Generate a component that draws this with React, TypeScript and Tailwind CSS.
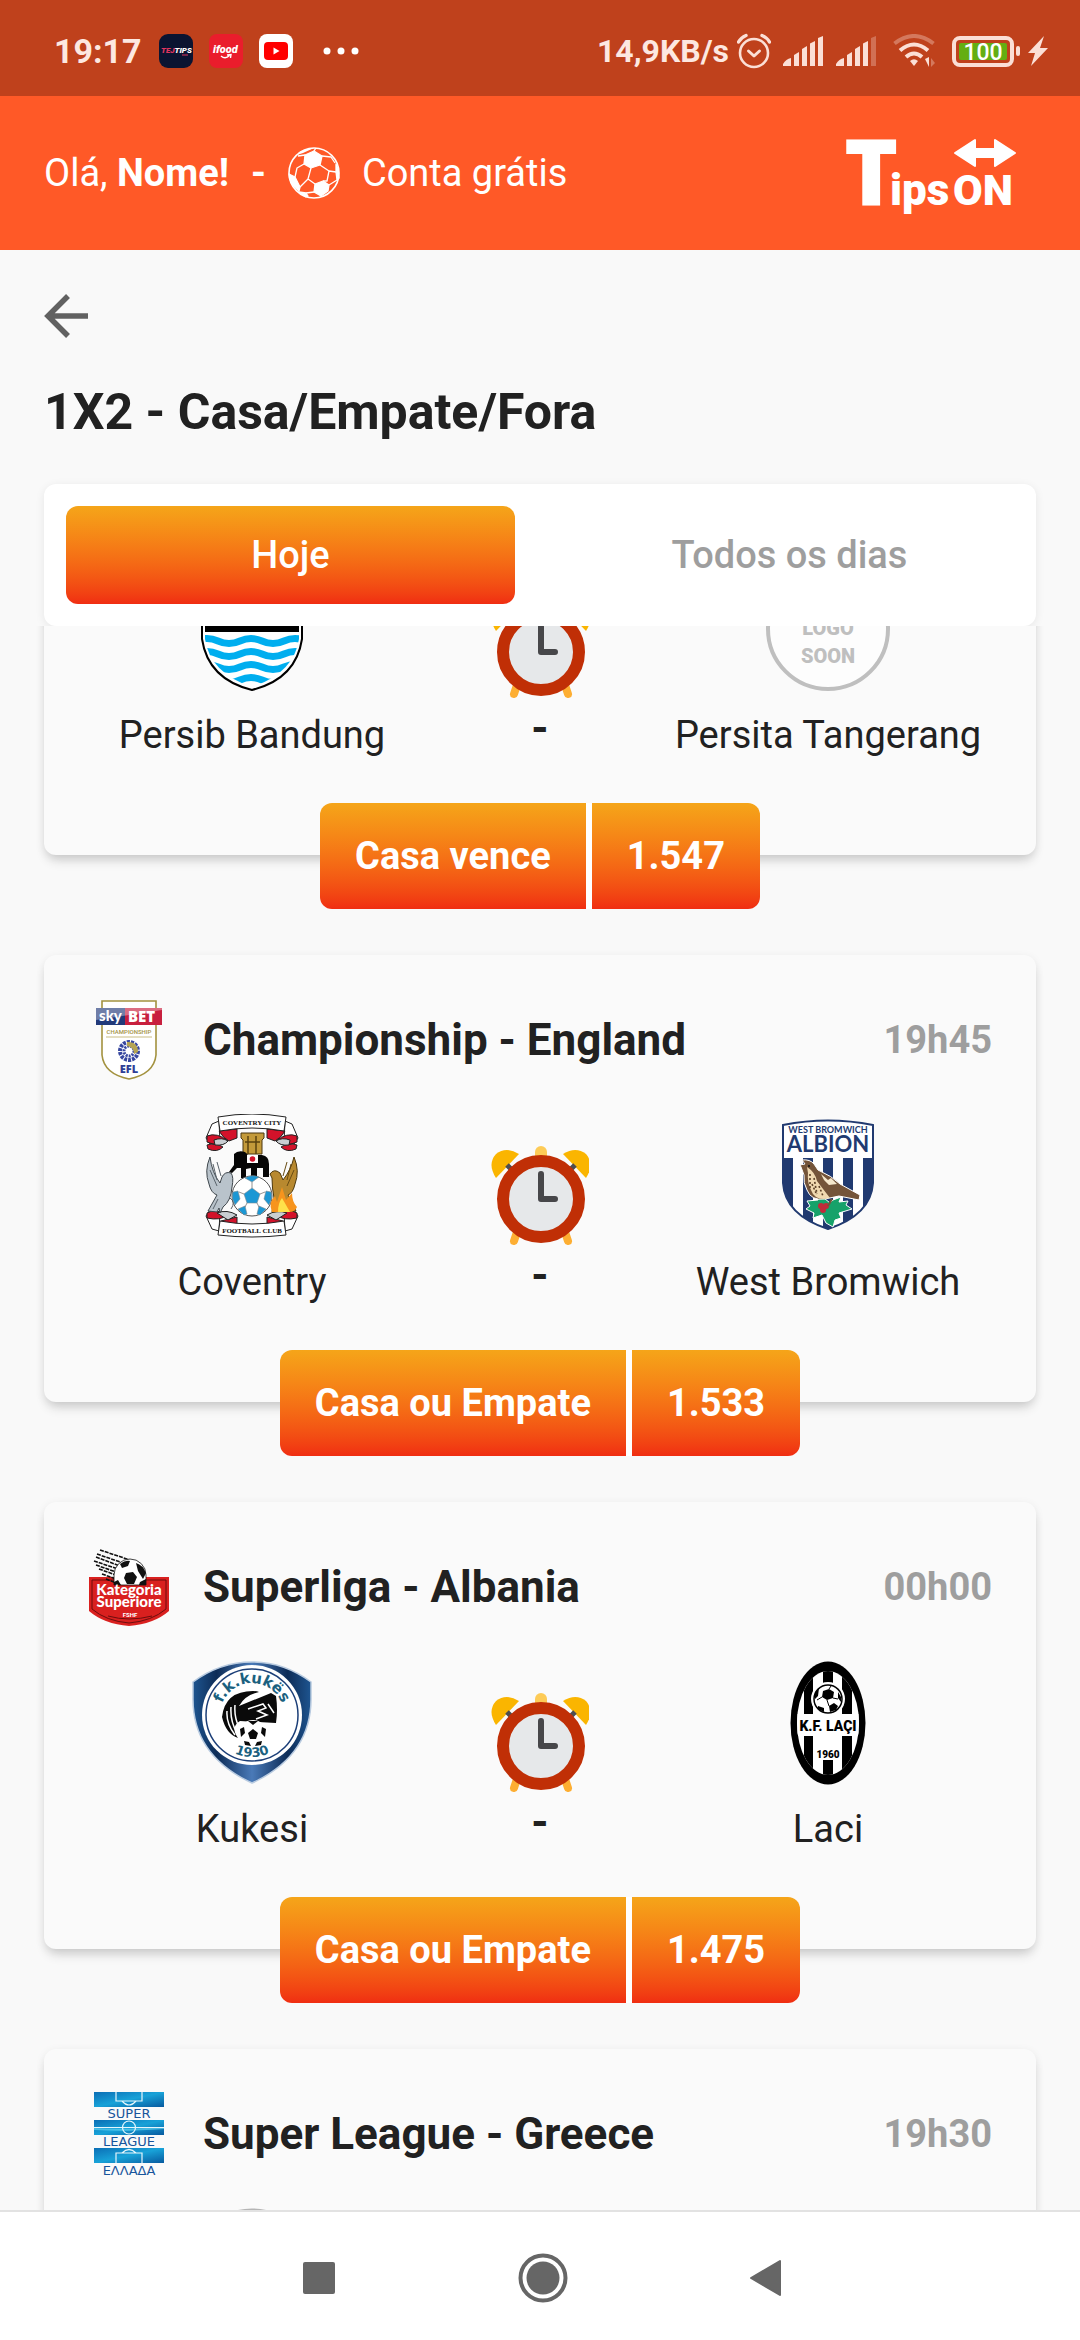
import { useLayoutEffect, useRef, useState } from "react";
import type { ReactNode } from "react";

type Match = {
  league: string;
  time: string;
  leagueLogo: ReactNode;
  home: string;
  homeLogo: ReactNode;
  away: string;
  awayLogo: ReactNode;
  tip: string;
  odd: string;
};

/* ---------- status bar icons ---------- */

const AppBadges = () => (
  <div className="flex items-center gap-4">
    <svg width="34" height="34" viewBox="0 0 34 34">
      <rect width="34" height="34" rx="9" fill="#0b1431" />
      <text x="2" y="19" fontFamily="Roboto" fontWeight="900" fontStyle="italic" fontSize="8" fill="#fff">
        <tspan fill="#e0355f">TEJ</tspan>TIPS
      </text>
      <path d="M23 21h6" stroke="#e0355f" strokeWidth="1" />
    </svg>
    <svg width="34" height="34" viewBox="0 0 34 34">
      <rect width="34" height="34" rx="8" fill="#ea1d2c" />
      <text x="4" y="19" fontFamily="Roboto" fontWeight="900" fontStyle="italic" fontSize="11" fill="#fff">ifood</text>
      <path d="M12 22c3 2.500 6 2 8.500-.5M18 21l4-.5-.5 3.500" fill="none" stroke="#fff" strokeWidth="1.400" />
    </svg>
    <svg width="34" height="34" viewBox="0 0 34 34">
      <rect width="34" height="34" rx="8" fill="#fff" />
      <rect x="5" y="8" width="24" height="18" rx="4" fill="#f00" />
      <path d="M14.500 13.500v7l6-3.500z" fill="#fff" />
    </svg>
  </div>
);

const AlarmIcon = () => (
  <svg width="34" height="36" viewBox="0 0 34 36" fill="none" stroke="#fbdfd6" strokeWidth="2.600" strokeLinecap="round" strokeLinejoin="round">
    <circle cx="17" cy="20" r="14" />
    <path d="M11.500 18l5.500 5 5.500-5" strokeWidth="3" />
    <path d="M1.500 9Q4 4.500 9 2.500M32.500 9Q30 4.500 25 2.500" strokeWidth="3.400" />
  </svg>
);

const SignalIcon = ({ weak = false }: { weak?: boolean }) => (
  <svg width="41" height="30" viewBox="0 0 41 30" fill="#fbdfd6">
    <path d="M0 30v-2q3-5 8-6v8z" />
    <path d="M11 30V19l5-3v14z" />
    <path d="M19 30V13l5-3v20z" />
    <path d="M27 30V7.500l5-2.500v25z" />
    <path d="M35 30V2l5-2v30z" opacity={weak ? 0.3 : 1} />
  </svg>
);

const WifiIcon = () => (
  <svg width="43" height="34" viewBox="0 0 43 34" fill="none" stroke="#fbdfd6" strokeWidth="4">
    <path d="M1.500 9.500Q21 -5.500 40.500 9.500" opacity="0.35" />
    <path d="M7 16.500Q21 4.500 35 16.500" />
    <path d="M13 23Q21 16 29 23" />
    <path d="M17 27q4-3.500 8 0l-4 5z" fill="#fbdfd6" stroke="none" />
    <path d="M32 25l4 8v-10z" fill="#fbdfd6" stroke="none" />
    <path d="M38 33v-9l4 5z" fill="#fbdfd6" stroke="none" opacity="0.35" />
  </svg>
);

const BatteryIcon = () => (
  <svg width="68" height="32" viewBox="0 0 68 32">
    <rect x="2" y="3" width="58" height="27" rx="6" fill="none" stroke="#fbdfd6" strokeWidth="4" />
    <rect x="7" y="8" width="48" height="17" rx="2" fill="#64ae12" />
    <rect x="64" y="11" width="4" height="10" rx="2" fill="#fbdfd6" />
    <text x="31" y="25" textAnchor="middle" fontFamily="Roboto" fontWeight="500" fontSize="23" fill="#fff">100</text>
  </svg>
);

const BoltIcon = () => (
  <svg width="20" height="30" viewBox="0 0 20 30">
    <path d="M16 0L0 17h7l-4 13L20 12h-8z" fill="#fbdfd6" />
  </svg>
);

/* ---------- shared drawings ---------- */

const HeaderBall = () => (
  <svg width="52" height="54" viewBox="0 0 52 54" fill="#fff" stroke="#fff" strokeWidth="1.300" strokeLinejoin="round">
    <circle cx="26" cy="27" r="25" fill="none" strokeWidth="1.600" />
    <path d="M17 9l9-4 8 5-2 9-9 3-7-4z" />
    <path d="M1 28l6 3 5 10-1 4Q1 37 1 28z" />
    <path d="M27 38l8-3 6 4-1 6-7 5-7-4z" />
    <path d="M48 18l2 5 1 9-2 2-1-8z" />
    <path d="M11 46l7 1 2 3-2 1z" />
    <path d="M17 9l-7 1M34 10l9 1 4 6M16 18l-7 4-2 9M23 22l-3 11-8 8M32 19l9 6-2 10-4 0M41 25l7 1M20 33l7 5M26 5l2-3M41 39l8-5M26 46l-8 1" fill="none" />
    <path d="M9 9l6-2 11-5-4 0-11 4z" stroke="none" />
  </svg>
);

const TipsOnLogo = () => (
  <svg width="178" height="86" viewBox="-6 -8 178 86" fill="#fff">
    <path d="M107 15L127 2v9h20V2l20 13-20 13v-9h-20v9z" strokeWidth="2" stroke="#fff" strokeLinejoin="round" />
    <text x="-4" y="67" fontFamily="'Open Sans'" fontWeight="800" fontSize="92">T</text>
    <text x="42" y="67" fontFamily="Roboto" fontWeight="900" fontSize="44">ips</text>
    <text x="105" y="67" fontFamily="Roboto" fontWeight="900" fontSize="43">ON</text>
  </svg>
);

const ClockIcon = () => (
  <svg width="98" height="100" viewBox="0 0 98 100">
    <rect x="44" y="0" width="12" height="16" rx="6" fill="#fdcb57" />
    <path d="M27 83l-4 12M73 83l4 12" stroke="#fdae32" strokeWidth="8" strokeLinecap="round" />
    <path d="M5 32Q-4 18 5 8Q15 0 28 8z" fill="#fab500" />
    <path d="M95 32Q104 18 95 8Q85 0 72 8z" fill="#fab500" />
    <path d="M16 19l6 6M84 19l-6 6" stroke="#4d4d50" strokeWidth="5" />
    <circle cx="50" cy="53" r="38" fill="#e6e8ea" stroke="#c02f06" strokeWidth="12" />
    <path d="M50 28v25h14" fill="none" stroke="#47474a" strokeWidth="6" strokeLinecap="round" strokeLinejoin="round" />
  </svg>
);

/* ---------- league logos ---------- */

const EflLogo = () => (
  <svg width="82" height="82" viewBox="0 0 82 82">
    <path d="M14 2h54v54q-2 19-27 24Q16 75 14 56z" fill="#fff" stroke="#a3923f" strokeWidth="1.600" />
    <rect x="8" y="9" width="30" height="17" fill="#223a7a" />
    <rect x="37" y="9" width="37" height="17" fill="#c8203e" />
    <path d="M8 9h66v2L8 21z" fill="#fff" opacity="0.35" />
    <text x="11" y="22" fontFamily="Lato" fontWeight="900" fontSize="15" fill="#fff">sky</text>
    <text x="40" y="23" fontFamily="'Open Sans'" fontWeight="800" fontSize="15" fill="#fff">BET</text>
    <text x="41" y="35" textAnchor="middle" fontFamily="Roboto" fontWeight="500" fontSize="6" fill="#a3923f">CHAMPIONSHIP</text>
    <path d="M18 38h46" stroke="#c9bd84" strokeWidth="1" />
    <circle cx="41" cy="52" r="9" fill="none" stroke="#3747a0" strokeWidth="4" strokeDasharray="3 1" />
    <circle cx="41" cy="52" r="5" fill="none" stroke="#3747a0" strokeWidth="3" strokeDasharray="2 1" />
    <path d="M39 43q11-1 11 10l-4 2q0-7-7-8z" fill="#b5a452" />
    <text x="41" y="74" textAnchor="middle" fontFamily="'Open Sans'" fontWeight="800" fontSize="11" fill="#2f3f97">EFL</text>
  </svg>
);

const KategoriaLogo = () => (
  <svg width="82" height="82" viewBox="0 0 82 82">
    <path d="M1 31h80v34Q66 78 41 80Q16 78 1 65z" fill="#d9201f" />
    <path d="M4 34h74v29Q64 75 41 77Q18 75 4 63z" fill="none" stroke="#6d0d0d" strokeWidth="1" />
    <path
      d="M12 4l30 10M9 8l26 9M8 11l24 9M6 15l24 8M8 19l20 7M11 23l17 6M14 28l14 5M18 33l10 4"
      stroke="#111"
      strokeWidth="1.600"
      strokeDasharray="4 1"
    />
    <path d="M26 39V29a16 16 0 0 1 32 0v10z" fill="#fff" stroke="#111" strokeWidth="0.800" />
    <path d="M32 18q5-4 10-3l-2 5-6 2zM48 17q7 2 10 10l-3 6-5-8zM38 27l7-1 4 5-3 7h-7l-3-6zM26 36l4-2 3 5h-7zM52 36l6-3v6h-7z" fill="#111" />
    <text x="41" y="49" textAnchor="middle" fontFamily="Lato" fontWeight="900" fontSize="15" fill="#fff">Kategoria</text>
    <text x="41" y="61" textAnchor="middle" fontFamily="Lato" fontWeight="900" fontSize="15" fill="#fff">Superiore</text>
    <text x="42" y="71" textAnchor="middle" fontFamily="Roboto" fontWeight="700" fontSize="6" fill="#fff">FSHF</text>
    <path d="M20 70q21 6 44 0" fill="none" stroke="#6d0d0d" strokeWidth="1" />
  </svg>
);

const SuperLeagueLogo = () => (
  <svg width="82" height="84" viewBox="0 0 82 84">
    <defs>
      <linearGradient id="sl" x1="0" y1="0" x2="1" y2="1">
        <stop offset="0" stopColor="#0b6eb5" />
        <stop offset="0.500" stopColor="#18a2d8" />
        <stop offset="1" stopColor="#075a9f" />
      </linearGradient>
    </defs>
    <rect x="6" y="0" width="70" height="15" fill="url(#sl)" />
    <rect x="6" y="28" width="70" height="15" fill="url(#sl)" />
    <rect x="6" y="56" width="70" height="15" fill="url(#sl)" />
    <path d="M6 37q30 2 70-1" stroke="#5fd0ef" strokeWidth="2" fill="none" opacity="0.700" />
    <g fill="none" stroke="#e6f6fc" strokeWidth="1.200">
      <path d="M28 0v9h26V0M34 9q7 8 14 0M6 35.500h70M28 71v-10h26v10M34 61q7-7 14 0" />
      <circle cx="41" cy="35.500" r="6.500" />
    </g>
    <g fontFamily="'DejaVu Sans'" fontSize="13" fill="#17559c" textAnchor="middle">
      <text x="41" y="26">SUPER</text>
      <text x="41" y="54">LEAGUE</text>
      <text x="41" y="83">ΕΛΛΑΔΑ</text>
    </g>
  </svg>
);

/* ---------- team crests ---------- */

const PersibCrest = () => (
  <svg width="124" height="124" viewBox="0 0 124 124">
    <defs>
      <clipPath id="persib">
        <path d="M15 10h94v62Q104 106 62 120Q20 106 15 72z" />
      </clipPath>
    </defs>
    <path d="M12 8h100v64Q106 112 62 123Q18 112 12 72z" fill="#fff" stroke="#000" strokeWidth="2" />
    <g clipPath="url(#persib)">
      <rect x="10" y="0" width="104" height="65" fill="#000" />
      <g fill="none" stroke="#00aeef" strokeWidth="7">
        <path d="M6 74q11-5 22 0t22 0 22 0 22 0 22 0" />
        <path d="M6 87q11-5 22 0t22 0 22 0 22 0 22 0" />
        <path d="M6 100q11-5 22 0t22 0 22 0 22 0 22 0" />
        <path d="M6 113q11-5 22 0t22 0 22 0 22 0 22 0" />
      </g>
    </g>
  </svg>
);

const SoonCrest = () => (
  <svg width="124" height="124" viewBox="0 0 124 124">
    <circle cx="62" cy="62" r="60" fill="#fdfdfd" stroke="#bfbfbf" strokeWidth="4" />
    <g fontFamily="Roboto" fontWeight="900" fontSize="20" fill="#bfbfbf" textAnchor="middle">
      <text x="62" y="68">LOGO</text>
      <text x="62" y="96">SOON</text>
    </g>
  </svg>
);

const CoventryCrest = () => (
  <svg width="124" height="124" viewBox="0 0 124 124">
    {/* banners */}
    <g stroke="#222" strokeWidth="1" fill="#fff">
      <path d="M29 7l-7 3-6 14 4 6 10-2zM95 7l7 3 6 14-4 6-10-2zM29 117l-7-2-6-13 4-6 10 2zM95 117l7-2 6-13-4-6-10 2z" />
      <g fill="#d3122a">
        <path d="M17 22q10-4 21 5-8 7-21 1zM17 31q8-3 16 2-6 6-15 2zM29 17l18-2v9l-8 3q-6-3-10-10z" />
        <path d="M107 22q-10-4-21 5 8 7 21 1zM107 31q-8-3-16 2 6 6 15 2zM95 17l-18-2v9l8 3q6-3 10-10z" />
        <path d="M17 99q8-5 21 2-8 6-21 3zM107 99q-8-5-21 2 8 6 21 3zM31 107l16-4v9l-17-2zM93 107l-16-4v9l17-2z" />
      </g>
      <path d="M24 26q8-3 14 1-4 5-13 4zM100 26q-8-3-14 1 4 5 13 4zM27 99q10-4 20 2l-9 5zM97 99q-10-4-20 2l9 5z" fill="#c9ced2" />
      <path d="M28 3q34-6 68 0l-2 14q-32-6-64 0z" />
      <path d="M28 121q34 4 68 0l-2-14q-32 6-64 0z" />
    </g>
    <text x="62" y="11" textAnchor="middle" fontFamily="'Liberation Serif'" fontWeight="700" fontSize="7" fill="#111">COVENTRY CITY</text>
    <text x="62" y="119" textAnchor="middle" fontFamily="'Liberation Serif'" fontWeight="700" fontSize="7" fill="#111">FOOTBALL CLUB</text>
    {/* castle and elephant */}
    <path d="M51 19h23v5l-2 2v14H53V26l-2-2z" fill="#c39a3a" stroke="#4a3710" strokeWidth="1" />
    <path d="M58 22v18M66 22v18M55 28h15" stroke="#5b430f" strokeWidth="1.500" />
    <path d="M44 40q4-4 11-2l3 3h14q7 1 7 9v13h-6V54h-6v10h-6V54l-5 1v9h-5V54h-4l-5 5-3-1 5-7z" fill="#060606" />
    <path d="M57 41h11v8H57z" fill="#fff" />
    <circle cx="62.500" cy="45" r="2.800" fill="#d3122a" />
    {/* ball */}
    <circle cx="62" cy="82" r="20" fill="#fff" stroke="#555" strokeWidth="1" />
    <g fill="#1b97d4" stroke="#7a8a92" strokeWidth="0.600">
      <path d="M62 74l8 6-3 9H57l-3-9zM55 64q7-4 14-1l-7 5zM43 78l5-1 2 8-5 6q-4-7-2-13zM81 78l-5-1-2 8 5 6q4-7 2-13zM48 95l7-3 2 8-3 1zM76 95l-7-3-2 8 3 1z" />
    </g>
    <path d="M62 68v6M54 80l-5-2M70 80l5-2M57 89l-2 4M67 89l2 4" stroke="#777" strokeWidth="0.800" />
    {/* eagle and phoenix */}
    <path d="M20 43q-6 14-1 27 2 9 8 11l-9 16 9 1 2-4 1 5 3-6q8-6 9-20 2-10-1-14-6-2-9 4l-2 6q-8-10-10-26z" fill="#b9c3cb" stroke="#3f474d" strokeWidth="1" />
    <path d="M23 50l4 16M20 56l7 16M27 48l4 14M28 85l-5 10M40 84q6 4 1 11" stroke="#59636b" strokeWidth="1" fill="none" />
    <path d="M104 43q6 14 1 27-2 9-7 11l8 16-24 1 2-14q-2-10-2-20l-2-4q4-6 10-1l3 7q8-10 11-23z" fill="#b8892f" stroke="#4f390c" strokeWidth="1" />
    <path d="M101 50l-4 16M104 56l-7 16M97 48l-4 14" stroke="#684b12" strokeWidth="1" fill="none" />
    <path d="M82 98q-4-10 3-16l2 6 5-15 4 13 6-7q0 9 5 14-2 5-8 5z" fill="#f7941d" />
    <path d="M88 98q0-9 4-14 4 7 8 14z" fill="#ffe14a" />
  </svg>
);

const WestBromCrest = () => (
  <svg width="124" height="124" viewBox="0 0 124 124">
    <defs>
      <clipPath id="wba">
        <path d="M17 11q45-9 90 0v58q-2 32-45 46-43-14-45-46z" />
      </clipPath>
    </defs>
    <g clipPath="url(#wba)">
      <rect x="10" y="4" width="104" height="114" fill="#fff" />
      <path d="M17 44h10v75H17zM37 44h10v75H37zM57 44h10v75H57zM77 44h10v75H77zM97 44h10v75H97z" fill="#213a70" />
    </g>
    <path d="M17 11q45-9 90 0v58q-2 32-45 46-43-14-45-46z" fill="none" stroke="#213a70" strokeWidth="2" />
    <text x="62" y="19" textAnchor="middle" fontFamily="Lato" fontWeight="700" fontSize="9" fill="#213a70">WEST BROMWICH</text>
    <text x="62" y="38" textAnchor="middle" fontFamily="Lato" fontWeight="700" fontSize="22" fill="#213a70">ALBION</text>
    {/* holly */}
    <path d="M58 84l-5-3-1 5-11 1 3 5-4 3 8 4-1 5 9-3 4 8 7 4 2-7 6-2-2-5 13-4-6-4 2-4-9 1 2-5-8 3-3 3z" fill="#16a26a" stroke="#fff" strokeWidth="1" />
    <circle cx="55" cy="92" r="3" fill="#c22a3a" />
    <circle cx="60" cy="92" r="3" fill="#c22a3a" />
    <circle cx="57" cy="96" r="3" fill="#c22a3a" />
    {/* throstle */}
    <path d="M34 51l5-1-3-4q8-1 12 4l4 6q14 6 22 14l20 11-1 5-20-4-14 3q-14 2-18-9-4-7-3-15l-3-8z" fill="#745439" stroke="#fff" strokeWidth="1" />
    <path d="M41 53q8 5 10 14 6 8 13 17l-6 1q-10 0-13-9-4-8-3-17z" fill="#f0d9b0" />
    <path d="M44 60v14M48 64l3 16M53 72l4 10M46 70l4 9" stroke="#5b3f26" strokeWidth="1.600" strokeDasharray="2 2" />
    <path d="M55 60l7 6 3-2 6 6-8 1-5-5z" fill="#f5e7cc" />
    <path d="M66 85l-4 7" stroke="#745439" strokeWidth="2" />
    <circle cx="43" cy="52" r="1" fill="#111" />
  </svg>
);

const KukesiCrest = () => (
  <svg width="124" height="124" viewBox="0 0 124 124">
    <defs>
      <linearGradient id="kuk" x1="0" y1="0" x2="1" y2="0">
        <stop offset="0" stopColor="#1e5590" />
        <stop offset="0.200" stopColor="#0d2c57" />
        <stop offset="0.500" stopColor="#4a7ab8" />
        <stop offset="0.800" stopColor="#0d2c57" />
        <stop offset="1" stopColor="#1e5590" />
      </linearGradient>
      <path id="kukTop" d="M31 62a32 32 0 1 1 62 0" />
      <path id="kukBottom" d="M20 54a42 42 0 0 0 84 0" />
    </defs>
    <path d="M3 21Q30 1 62 1T121 21V36Q122 94 62 122Q2 94 3 36z" fill="url(#kuk)" stroke="#b9cbe0" strokeWidth="1.500" />
    <circle cx="62" cy="54" r="50" fill="#fff" />
    <circle cx="62" cy="54" r="46" fill="none" stroke="#1c3f78" strokeWidth="1.500" />
    {/* helmeted warrior */}
    <path d="M32 56q3-26 31-26 4 0 6 1-14 3-20 14l32-13 5 3q2 14 0 27l-36-2q-10 6-2 17-12-4-16-21z" fill="#0a0a0a" />
    <path d="M37 50q-1 12 8 24M41 46q-1 14 6 26M45 44q-1 12 4 22M58 48l15-5 3 4-8 3 9 4-11 4M78 43l6 9" fill="none" stroke="#fff" strokeWidth="1.500" />
    {/* ball */}
    <circle cx="63" cy="73" r="14" fill="#fff" />
    <path d="M63 68l5 4-2 6h-6l-2-6zM58 60h10l-5 4zM50 68l4-2 1 6-4 4zM76 68l-4-2-1 6 4 4zM54 80l5 1 2 4-6-1zM72 80l-5 1-2 4 6-1z" fill="#0a0a0a" />
    <text fontFamily="'DejaVu Sans'" fontWeight="700" fontSize="15" fill="#1b6180">
      <textPath href="#kukTop" startOffset="50%" textAnchor="middle">f.k.kukës</textPath>
    </text>
    <text fontFamily="'DejaVu Sans'" fontWeight="700" fontSize="13" fill="#1b6180">
      <textPath href="#kukBottom" startOffset="50%" textAnchor="middle">1930</textPath>
    </text>
  </svg>
);

const LaciCrest = () => (
  <svg width="124" height="124" viewBox="0 0 124 124">
    <defs>
      <clipPath id="laci">
        <ellipse cx="62" cy="62" rx="31" ry="52" />
      </clipPath>
    </defs>
    <ellipse cx="62" cy="62" rx="37.500" ry="61.500" fill="#000" />
    <g clipPath="url(#laci)">
      <rect x="20" y="0" width="84" height="124" fill="#fff" />
      <path d="M38 0h9v124h-9zM57 0h10v124H57zM76 0h10v124h-10z" fill="#000" />
      <path d="M30 53h64v22H30z" fill="#fff" />
      <rect x="47" y="60" width="29" height="39" fill="#fff" />
    </g>
    <circle cx="62" cy="38" r="17" fill="#fff" />
    <circle cx="62" cy="38" r="14" fill="#fff" stroke="#000" strokeWidth="1.500" />
    <path d="M57 30l6-2 5 3-1 6-6 2-5-3zM49 32l4-5-1 8-3 3zM72 31l3 5v5l-3-4zM63 45l5-3 4 3-2 4-6 2zM52 45l6 2v4l-6-3z" fill="#000" />
    <path d="M56 36l-5 3M67 37l5 1M61 39l2 6M63 28l2-3" stroke="#000" strokeWidth="1" />
    <text x="62" y="70" textAnchor="middle" fontFamily="Roboto" fontWeight="900" fontSize="14" fill="#000">K.F. LAÇI</text>
    <text x="62" y="97" textAnchor="middle" fontFamily="Roboto" fontWeight="900" fontSize="10" fill="#000">1960</text>
  </svg>
);

const RoundCrest = () => (
  <svg width="124" height="124" viewBox="0 0 124 124">
    <circle cx="62" cy="62" r="60" fill="#f4f4f4" stroke="#b5b5b5" strokeWidth="3" />
  </svg>
);

const matches: Match[] = [
  {
    league: "",
    time: "",
    leagueLogo: null,
    home: "Persib Bandung",
    homeLogo: <PersibCrest />,
    away: "Persita Tangerang",
    awayLogo: <SoonCrest />,
    tip: "Casa vence",
    odd: "1.547",
  },
  {
    league: "Championship - England",
    time: "19h45",
    leagueLogo: <EflLogo />,
    home: "Coventry",
    homeLogo: <CoventryCrest />,
    away: "West Bromwich",
    awayLogo: <WestBromCrest />,
    tip: "Casa ou Empate",
    odd: "1.533",
  },
  {
    league: "Superliga - Albania",
    time: "00h00",
    leagueLogo: <KategoriaLogo />,
    home: "Kukesi",
    homeLogo: <KukesiCrest />,
    away: "Laci",
    awayLogo: <LaciCrest />,
    tip: "Casa ou Empate",
    odd: "1.475",
  },
  {
    league: "Super League - Greece",
    time: "19h30",
    leagueLogo: <SuperLeagueLogo />,
    home: "",
    homeLogo: <RoundCrest />,
    away: "",
    awayLogo: null,
    tip: "",
    odd: "",
  },
];

const Team = ({ name, logo }: { name: string; logo: ReactNode }) => (
  <div className="flex flex-col items-center gap-[22px]">
    <div className="h-[124px]">{logo}</div>
    <span className="h-11 whitespace-nowrap text-[38px] leading-[44px]">{name}</span>
  </div>
);

const MatchCard = ({ match }: { match: Match }) => (
  <article className="relative rounded-xl bg-[#fafafa] pt-11 shadow-[0_8px_12px_-3px_rgba(0,0,0,0.16),0_2px_10px_rgba(0,0,0,0.07)]">
    <header className="flex h-[82px] items-center gap-[33px] px-11">
      <div className="w-[82px]">{match.leagueLogo}</div>
      <h2 className="flex-1 text-[44px] font-bold">{match.league}</h2>
      <time className="text-[38px] font-bold text-[#9e9e9e]">{match.time}</time>
    </header>
    <div className="mt-[33px] grid grid-cols-3 px-16">
      <Team name={match.home} logo={match.homeLogo} />
      <div className="flex flex-col items-center pt-8">
        <ClockIcon />
        <span className="text-[44px] font-bold leading-[58px]">-</span>
      </div>
      <Team name={match.away} logo={match.awayLogo} />
    </div>
    {match.tip && (
      <div className="mt-[46px] -mb-[54px] flex justify-center">
        <button type="button" className="flex h-[106px] gap-[6px] overflow-hidden rounded-xl bg-white text-[38px] font-bold text-white">
          <span className="flex items-center bg-linear-to-b from-[#f5a519] to-[#f02d12] px-[35px]">{match.tip}</span>
          <span className="flex items-center bg-linear-to-b from-[#f5a519] to-[#f02d12] px-[35px]">{match.odd}</span>
        </button>
      </div>
    )}
  </article>
);

export default function App() {
  const [tab, setTab] = useState("hoje");
  const listRef = useRef<HTMLElement>(null);

  useLayoutEffect(() => {
    if (listRef.current) listRef.current.scrollTop = 218;
  }, []);

  const active = "bg-linear-to-b from-[#f5a519] to-[#f02d12] text-white";
  const idle = "text-[#9e9e9e]";

  return (
    <div className="flex h-screen flex-col bg-[#f9f9f9] font-[Roboto,sans-serif] text-[#212121]">
      {/* Status bar */}
      <div className="flex h-24 shrink-0 items-center justify-between bg-[#bf411c] pt-1.5 pr-8 pl-[54px] text-[#fde8e1]">
        <div className="flex items-center">
          <span className="mr-[17px] text-[34px] font-bold">19:17</span>
          <AppBadges />
          <svg className="ml-[30px]" width="36" height="8" viewBox="0 0 36 8" fill="#fff">
            <circle cx="4" cy="4" r="3.500" />
            <circle cx="18" cy="4" r="3.500" />
            <circle cx="32" cy="4" r="3.500" />
          </svg>
        </div>
        <div className="flex items-center gap-3">
          <div className="flex items-center gap-2">
            <span className="text-[32px] font-bold">14,9KB/s</span>
            <AlarmIcon />
          </div>
          <SignalIcon />
          <SignalIcon weak />
          <div className="ml-1 flex items-center gap-4">
            <WifiIcon />
            <div className="flex items-center gap-2">
              <BatteryIcon />
              <BoltIcon />
            </div>
          </div>
        </div>
      </div>

      {/* Header */}
      <header className="flex h-[154px] shrink-0 items-center justify-between bg-[#ff5927] pr-[60px] pl-11 text-[38px] text-white">
        <div className="flex items-center">
          <p>
            Olá, <b>Nome!</b>
          </p>
          <b className="mx-[22px]">-</b>
          <HeaderBall />
          <p className="ml-[22px]">Conta grátis</p>
        </div>
        <TipsOnLogo />
      </header>

      <div className="shrink-0 px-11 pt-11">
        <button type="button" aria-label="Voltar" className="block">
          <svg width="44" height="44" viewBox="0 0 44 44" fill="none" stroke="#616161" strokeWidth="5.500">
            <path d="M44 22H4M24 2L4 22l20 20" />
          </svg>
        </button>
        <h1 className="mt-11 text-[50px] font-bold leading-[60px]">1X2 - Casa/Empate/Fora</h1>
      </div>

      {/* Tabs */}
      <div className="mx-11 mt-[42px] flex h-[142px] shrink-0 rounded-xl bg-white p-[22px] text-[38px] font-medium shadow-[0_2px_10px_rgba(0,0,0,0.08)]">
        <button
          type="button"
          onClick={() => setTab("hoje")}
          className={`flex-1 rounded-xl ${tab === "hoje" ? active : idle}`}
        >
          Hoje
        </button>
        <button
          type="button"
          onClick={() => setTab("todos")}
          className={`ml-[50px] flex-1 rounded-xl ${tab === "todos" ? active : idle}`}
        >
          Todos os dias
        </button>
      </div>

      {/* Matches */}
      <main ref={listRef} className="min-h-0 flex-1 overflow-y-auto px-11 [scrollbar-width:none]">
        <div className="flex flex-col gap-[100px]">
          {matches.map((match) => (
            <MatchCard key={match.league} match={match} />
          ))}
        </div>
      </main>

      {/* Android navigation */}
      <nav className="flex h-[130px] shrink-0 items-center justify-center gap-40 border-t-2 border-[#e2e2e2] bg-white pt-1 pl-1.5">
        <button type="button" aria-label="Recentes" className="flex w-16 justify-center">
          <svg width="32" height="32" viewBox="0 0 32 32">
            <rect width="32" height="32" rx="2" fill="#666" />
          </svg>
        </button>
        <button type="button" aria-label="Início" className="flex w-16 justify-center">
          <svg width="50" height="50" viewBox="0 0 50 50">
            <circle cx="25" cy="25" r="22.500" fill="none" stroke="#666" strokeWidth="4" />
            <circle cx="25" cy="25" r="16.500" fill="#666" />
          </svg>
        </button>
        <button type="button" aria-label="Voltar ao app anterior" className="flex w-16 justify-center">
          <svg width="34" height="38" viewBox="0 0 34 38">
            <path d="M1 19L30 2v34z" fill="#666" stroke="#666" strokeWidth="2" strokeLinejoin="round" />
          </svg>
        </button>
      </nav>
    </div>
  );
}
